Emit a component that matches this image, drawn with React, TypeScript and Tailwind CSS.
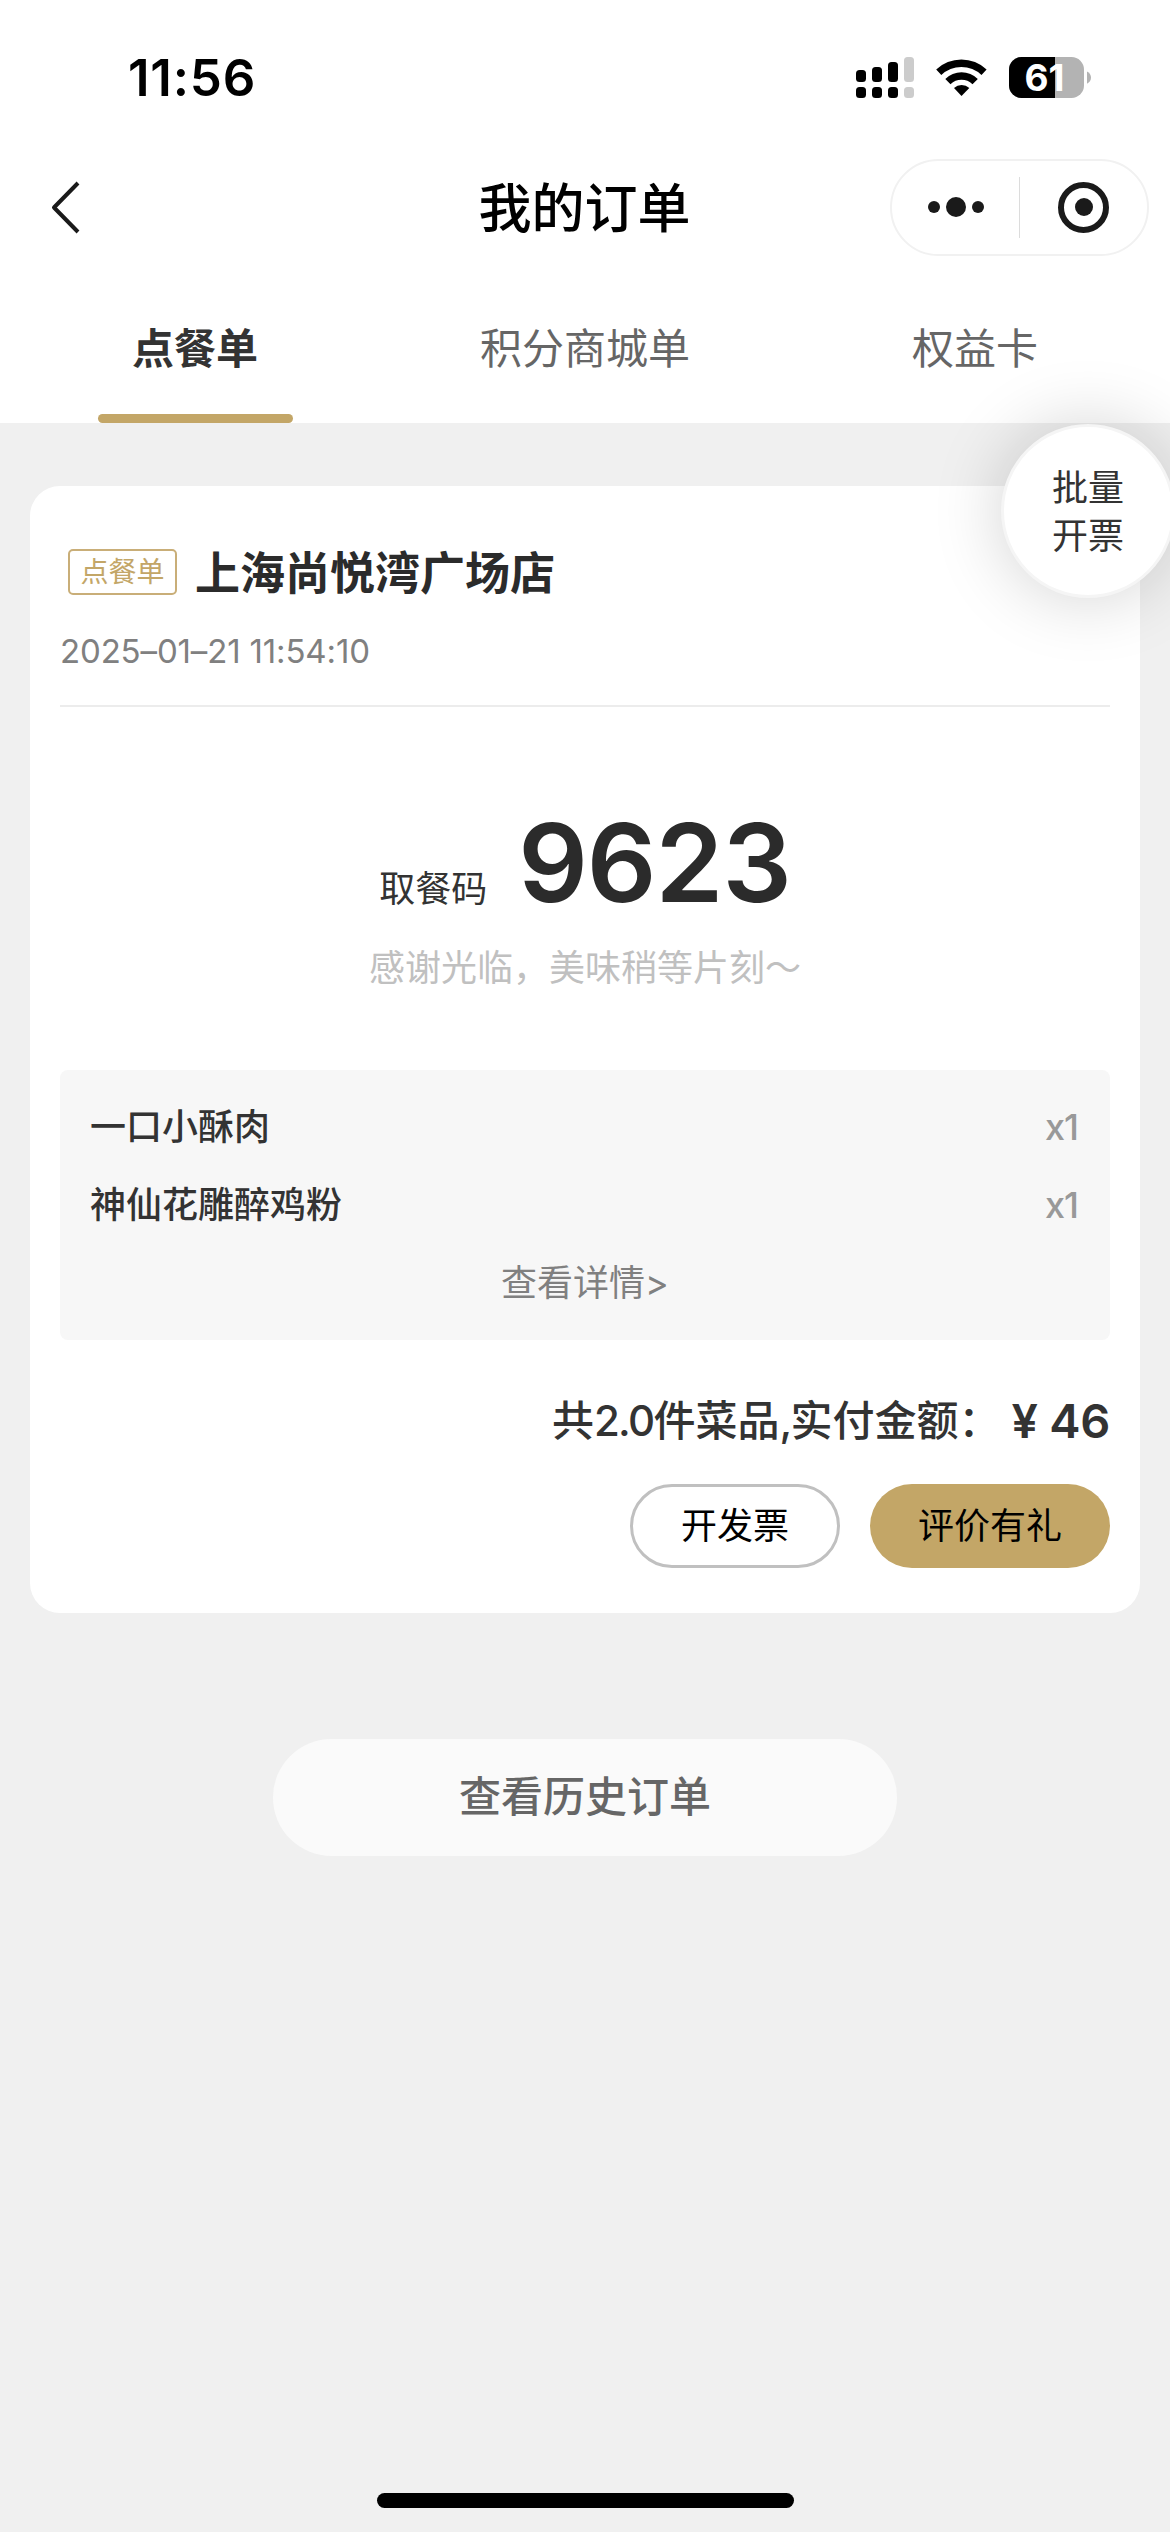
import React from 'react';

const dishes = [
  { name: '一口小酥肉', count: 'x1' },
  { name: '神仙花雕醉鸡粉', count: 'x1' },
];

function StatusBar() {
  return (
    <div className="flex h-[156px] justify-between pl-[128px] pr-[79px]">
      <div className="mt-[47px] h-[62px] text-[51px] font-semibold leading-[62px] tracking-[0.8px] text-black">11:56</div>
      <svg className="mt-[55px]" width="236" height="46" viewBox="855 55 236 46">
        <g fill="#000">
          <rect x="856" y="70" width="10" height="12" rx="3.5" />
          <rect x="872" y="67" width="10" height="15" rx="3.5" />
          <rect x="888" y="62" width="10" height="20" rx="3.5" />
          <rect x="856" y="87" width="10" height="11" rx="3.5" />
          <rect x="872" y="87" width="10" height="11" rx="3.5" />
          <rect x="888" y="87" width="10" height="11" rx="3.5" />
        </g>
        <g fill="#cccccc">
          <rect x="904" y="57" width="10" height="25" rx="3.5" />
          <rect x="904" y="87" width="10" height="11" rx="3.5" />
        </g>
        <path d="M936.200 69.500A36.500 36.500 0 0 1 986.600 69.500L981.500 75A29 29 0 0 0 941.300 75Z" fill="#000" />
        <path d="M945.300 79A23 23 0 0 1 977.800 79L972.500 84.300A15.800 15.800 0 0 0 950.500 84.300Z" fill="#000" />
        <path d="M954 88A11.500 11.500 0 0 1 969.300 88L961.500 96Z" fill="#000" />
        <clipPath id="batteryBody">
          <rect x="1009" y="57" width="75" height="41" rx="12.500" />
        </clipPath>
        <g clipPath="url(#batteryBody)">
          <rect x="1009" y="57" width="75" height="41" fill="#b3b3b3" />
          <rect x="1009" y="57" width="46" height="41" fill="#000" />
        </g>
        <path d="M1087 71.500C1089.500 72.500 1091 75 1091 77.600S1089.500 82.700 1087 83.700Z" fill="#b3b3b3" />
        <text x="1044.500" y="91" textAnchor="middle" fontSize="37" fontWeight="700" fill="#fff">61</text>
      </svg>
    </div>
  );
}

function NavBar() {
  return (
    <div className="grid h-[102px] grid-cols-[1fr_auto_1fr] items-center pl-[48px] pr-[21px]">
      <svg width="36" height="56" viewBox="0 0 36 56" fill="none" stroke="#1a1a1a" strokeWidth="4">
        <path d="M30 4L6 28.500L30 53" strokeLinejoin="round" />
      </svg>
      <h1 className="ml-[-28px] mt-[3px] text-[53px] font-medium leading-[70px] text-black">我的订单</h1>
      <div className="flex h-[97px] w-[259px] items-center justify-self-end rounded-full border-2 border-[#f1f1f1]">
        <div className="flex flex-1 items-center justify-center gap-[6px]">
          <i className="size-[12px] rounded-full bg-[#1a1a1a]" />
          <i className="size-[20px] rounded-full bg-[#1a1a1a]" />
          <i className="size-[12px] rounded-full bg-[#1a1a1a]" />
        </div>
        <div className="h-[61px] w-px bg-[#dcdcdc]" />
        <div className="flex flex-1 items-center justify-center">
          <div className="flex size-[51px] items-center justify-center rounded-full border-[6px] border-[#1a1a1a]">
            <i className="size-[18px] rounded-full bg-[#1a1a1a]" />
          </div>
        </div>
      </div>
    </div>
  );
}

function Tabs() {
  return (
    <div className="grid h-[165px] grid-cols-3 text-center text-[42px] leading-[60px] text-[#666]">
      <div className="flex flex-col items-center justify-between pt-[61px] font-bold text-[#333]">
        点餐单
        <div className="h-[9px] w-[195px] rounded-full bg-[#c3a667]" />
      </div>
      <div className="pt-[61px]">积分商城单</div>
      <div className="pt-[61px]">权益卡</div>
    </div>
  );
}

function OrderCard() {
  return (
    <section className="mx-[30px] mt-[63px] flex h-[1127px] flex-col rounded-[30px] bg-white px-[30px] pt-[54px]">
      <div className="flex h-[64px] items-center pl-[8px]">
        <span className="flex h-[46px] w-[109px] items-center justify-center rounded-[5px] border-2 border-[#c9ae78] text-[28px] leading-none text-[#c3a667]">点餐单</span>
        <h2 className="ml-[18px] mt-[3px] text-[45px] font-bold leading-[64px] text-[#2b2b2b]">上海尚悦湾广场店</h2>
      </div>
      <div className="mt-[23px] h-[48px] text-[33px] leading-[48px] tracking-[-0.15px] text-[#808080]">2025–01–21 11:54:10</div>
      <div className="mt-[30px] h-[2px] bg-[#ececec]" />

      <div className="mt-[90px] flex h-[130px] items-baseline justify-center">
        <span className="text-[36px] text-[#333]">取餐码</span>
        <span className="ml-[31px] text-[109px] font-semibold leading-[130px] tracking-[-1px] text-[#2b2b2b]">9623</span>
      </div>
      <p className="mt-[15px] text-center text-[36px] leading-[52px] text-[#c0c0c0]">感谢光临，美味稍等片刻～</p>

      <div className="mt-[76px] h-[270px] rounded-[8px] bg-[#f7f7f7] px-[30px] pt-[18px] text-[36px] leading-[78px]">
        {dishes.map((dish) => (
          <div key={dish.name} className="flex justify-between font-medium text-[#333]">
            <span>{dish.name}</span>
            <span className="mr-[2px] tracking-[-1px] text-[#999]">{dish.count}</span>
          </div>
        ))}
        <div className="text-center text-[#808080]">查看详情&gt;</div>
      </div>

      <div className="mt-[50px] flex h-[62px] items-center justify-end font-medium leading-[62px] text-[#333]">
        <span className="text-[42px]">
          共<span className="tracking-[-1.7px]">2.0</span>件菜品<span className="tracking-[-1.7px]">,</span>实付金额：
        </span>
        <span className="ml-[11px] text-[47px] font-semibold tracking-[-0.3px]">¥ 46</span>
      </div>
      <div className="mt-[32px] flex justify-end gap-[30px] text-[36px] text-black">
        <button className="h-[84px] w-[210px] rounded-full border-[3px] border-[#c0c0c0]">开发票</button>
        <button className="h-[84px] w-[240px] rounded-full bg-[#c3a667]">评价有礼</button>
      </div>
    </section>
  );
}

export default function App() {
  return (
    <div className="relative flex h-[2532px] w-[1170px] flex-col overflow-hidden bg-[#f0f0f0] font-['Inter','Noto_Sans_CJK_SC',sans-serif]">
      <header className="bg-white">
        <StatusBar />
        <NavBar />
        <Tabs />
      </header>
      <OrderCard />
      <button className="mx-auto mt-[126px] h-[117px] w-[624px] rounded-full bg-[#fafafa] pb-[2px] text-[42px] font-medium text-[#666]">查看历史订单</button>
      <div className="mx-auto mb-[24px] mt-auto h-[15px] w-[417px] rounded-full bg-black" />

      <button className="absolute left-[1001px] top-[424px] flex size-[174px] items-center justify-center rounded-full border-[3px] border-[#f5f5f5] bg-white pt-[2px] text-[36px] leading-[48px] text-[#333] shadow-[0_0_70px_rgba(0,0,0,0.18)]">
        批量
        <br />
        开票
      </button>
    </div>
  );
}
